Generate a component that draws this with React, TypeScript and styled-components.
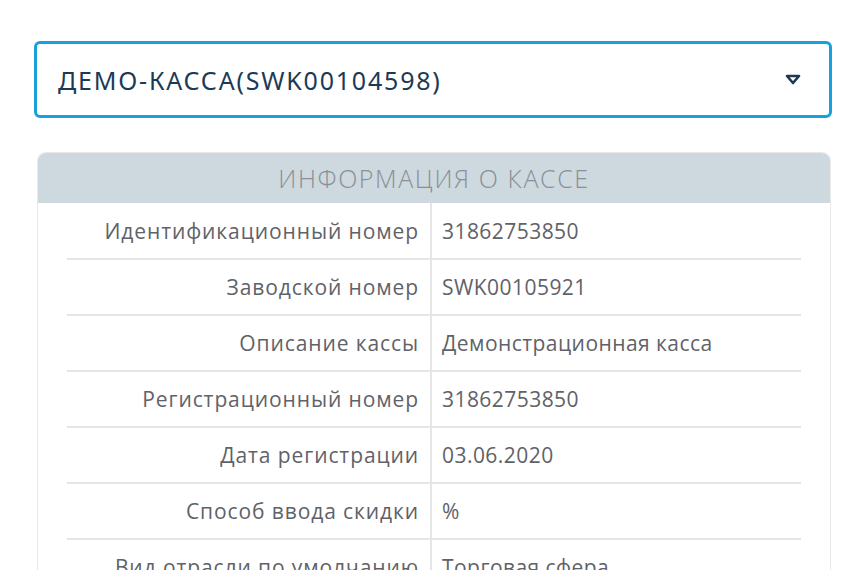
import { Fragment } from "react";
import styled, { createGlobalStyle } from "styled-components";

const GlobalStyle = createGlobalStyle`
  html, body {
    margin: 0;
    padding: 0;
    background: #ffffff;
    overflow: hidden;
  }
  body {
    font-family: "Open Sans", "Noto Sans", sans-serif;
  }
`;

const Page = styled.div`
  width: 862px;
  height: 570px;
  padding: 41px 30px 0 34px;
  box-sizing: border-box;
  display: flex;
  flex-direction: column;
  gap: 34px;
`;

const Select = styled.div`
  height: 77px;
  box-sizing: border-box;
  border: 3px solid #17a0dc;
  border-radius: 6px;
  display: flex;
  align-items: center;
  justify-content: space-between;
  padding: 0 28px 0 21px;
  font-family: "Noto Sans", "Open Sans", sans-serif;
  font-size: 25px;
  color: #1d3a55;
  letter-spacing: 1.8px;
`;

const Caret = () => (
  <svg width="16" height="11" viewBox="0 0 16 11">
    <path d="M2 2 H14 L8 9 Z" fill="none" stroke="#1d3a55" strokeWidth="2.6" strokeLinejoin="round" />
  </svg>
);

const Panel = styled.section`
  margin: 0 1px 0 3px;
  border: 1px solid #e9e9e9;
  border-bottom: none;
  border-radius: 9px 9px 0 0;
  overflow: hidden;
  flex: 1;
`;

const PanelHeader = styled.div`
  height: 50px;
  background: #cdd8df;
  display: flex;
  align-items: center;
  justify-content: center;
  font-size: 25px;
  font-weight: 300;
  color: #8a9096;
  letter-spacing: 1.6px;
`;

const Table = styled.div`
  margin: 0 29px;
  display: grid;
  grid-template-columns: 365px 1fr;
`;

const Label = styled.div<{ $first?: boolean }>`
  height: ${(p) => (p.$first ? 57 : 56)}px;
  box-sizing: border-box;
  border-bottom: 2px solid #e5e5e5;
  border-right: 2px solid #e5e5e5;
  display: flex;
  align-items: center;
  justify-content: flex-end;
  padding-right: 11px;
  font-size: 21px;
  letter-spacing: 0.9px;
  color: #5f6268;
  white-space: nowrap;
`;

const Value = styled(Label)`
  border-right: none;
  justify-content: flex-start;
  padding: 0 0 0 10px;
  letter-spacing: 0.45px;
`;

const rows: [string, string][] = [
  ["Идентификационный номер", "31862753850"],
  ["Заводской номер", "SWK00105921"],
  ["Описание кассы", "Демонстрационная касса"],
  ["Регистрационный номер", "31862753850"],
  ["Дата регистрации", "03.06.2020"],
  ["Способ ввода скидки", "%"],
  ["Вид отрасли по умолчанию", "Торговая сфера"],
];

export default function App() {
  return (
    <>
      <GlobalStyle />
      <Page>
        <Select>
          <span>ДЕМО-КАССА(SWK00104598)</span>
          <Caret />
        </Select>
        <Panel>
          <PanelHeader>ИНФОРМАЦИЯ О КАССЕ</PanelHeader>
          <Table>
            {rows.map(([label, value], i) => (
              <Fragment key={label}>
                <Label $first={i === 0}>{label}</Label>
                <Value $first={i === 0}>{value}</Value>
              </Fragment>
            ))}
          </Table>
        </Panel>
      </Page>
    </>
  );
}
